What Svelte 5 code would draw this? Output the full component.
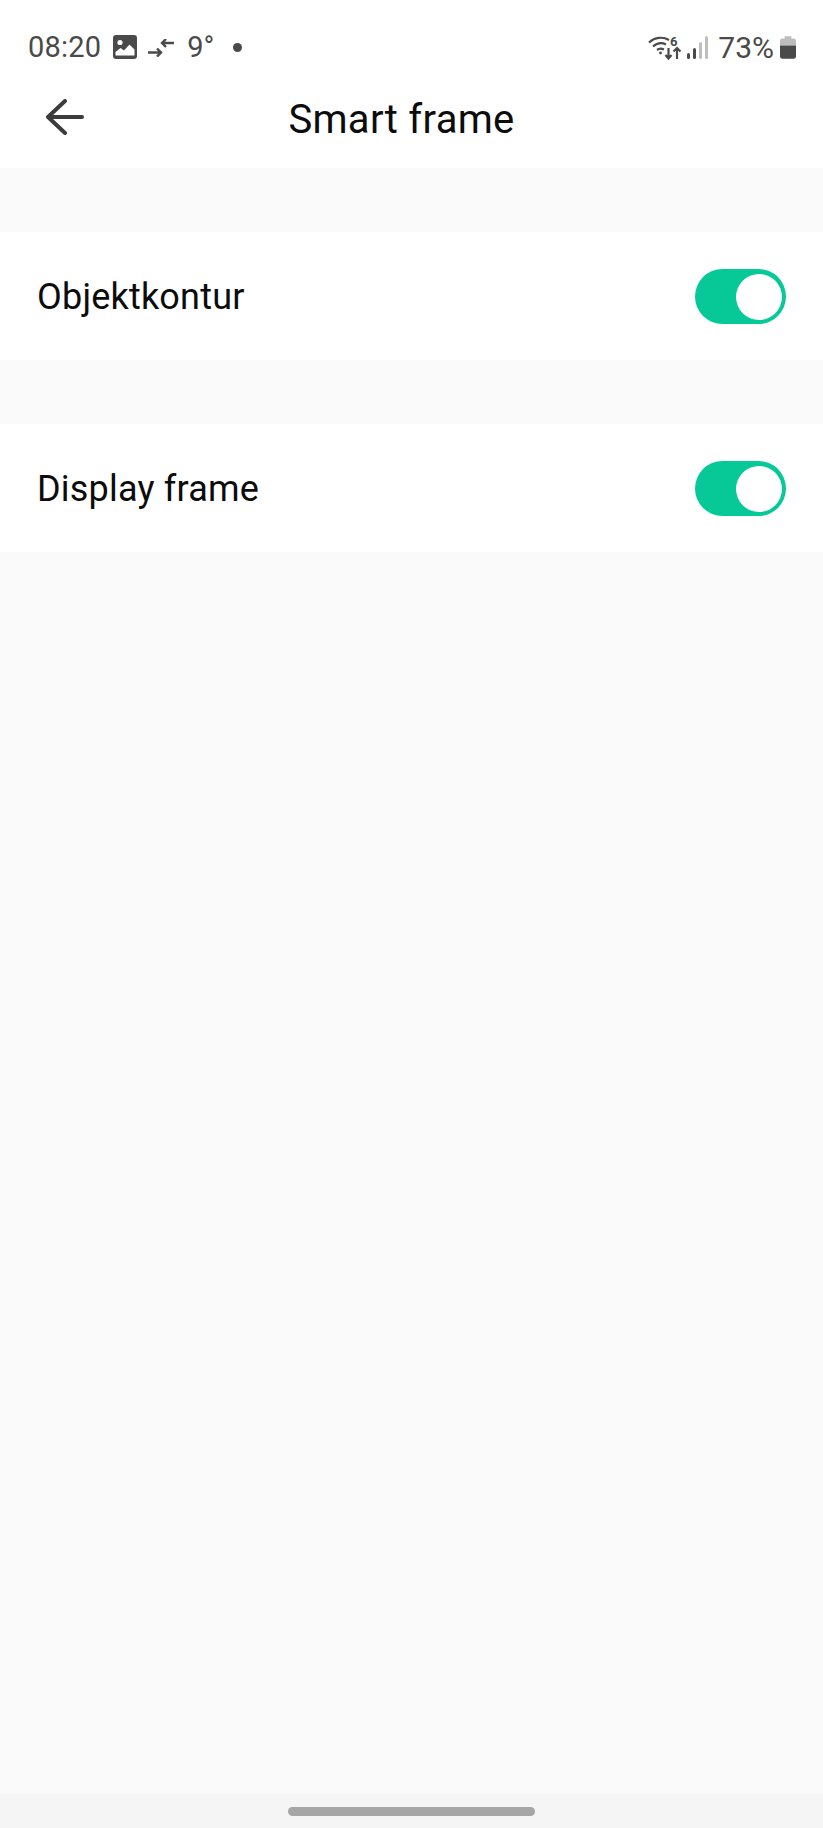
<script lang="ts">
  let settings = $state([
    { id: 'outline', label: 'Objektkontur', on: true },
    { id: 'frame', label: 'Display frame', on: true },
  ]);
</script>

<div class="screen">
  <div class="top">
    <div class="status">
      <div class="status-left">
        <span class="time">08:20</span>
        <svg class="ic-photo" width="24" height="24" viewBox="0 0 24 24">
          <rect x="0" y="0" width="24" height="24" rx="3" fill="#4a4a4a" />
          <circle cx="7" cy="7.500" r="2.600" fill="#fff" />
          <path d="M2.500 20.500v-3.500l5-4 3.500 2.500 5.500-6 5 5v6z" fill="#fff" />
        </svg>
        <svg class="ic-data" width="27" height="18" viewBox="0 0 27 18" fill="none" stroke="#4a4a4a" stroke-width="2.400">
          <path d="M0 13.500h13M9 9.500l4 4-4 4" />
          <path d="M26 4H14M18 0l-4 4 4 4" />
        </svg>
        <span class="temp">9°</span>
        <span class="dot"></span>
      </div>
      <div class="status-right">
        <svg class="ic-wifi" width="34" height="25" viewBox="0 0 34 25" fill="none" stroke="#4a4a4a" stroke-width="2.200">
          <path d="M1 7.500C7 2 15 1.500 21 5" />
          <path d="M5 11.500C9 8 14 7.500 18 9.500" />
          <path d="M9 15c2-1.500 5-1.500 7-.5" />
          <circle cx="12.500" cy="18" r="1.400" fill="#4a4a4a" stroke="none" />
          <path d="M20.500 13v10M17.500 20l3 3.500 3-3.500" />
          <path d="M29 24V13M25.500 16.500l3.500-3.500 3.500 3.500" />
          <text x="22" y="11" class="wifi-six" fill="#4a4a4a" stroke="none">6</text>
        </svg>
        <svg class="ic-signal" width="21" height="23" viewBox="0 0 21 23">
          <rect x="0" y="17" width="3" height="6" rx="1.500" fill="#4a4a4a" />
          <rect x="6" y="12" width="3" height="11" rx="1.500" fill="#4a4a4a" />
          <rect x="12" y="6" width="3" height="17" rx="1.500" fill="#bdbdbd" />
          <rect x="18" y="0" width="3" height="23" rx="1.500" fill="#bdbdbd" />
        </svg>
        <span class="pct">73%</span>
        <svg class="ic-batt" width="16" height="23" viewBox="0 0 17 24">
          <path d="M5 0h7v2.500h2.500A2.500 2.500 0 0 1 17 5v5H0V5a2.500 2.500 0 0 1 2.500-2.500H5z" fill="#bdbdbd" />
          <path d="M0 10h17v11.500a2.500 2.500 0 0 1-2.500 2.500h-12A2.500 2.500 0 0 1 0 21.500z" fill="#4a4a4a" />
        </svg>
      </div>
    </div>
    <div class="header">
      <svg class="back" width="38" height="36" viewBox="0 0 38 36" fill="none" stroke="#3c3c3c" stroke-width="4" stroke-linecap="round" stroke-linejoin="round">
        <path d="M19 2 2 18l17 16M2.500 18H36" />
      </svg>
      <h1>Smart frame</h1>
    </div>
  </div>

  {#each settings as item (item.id)}
    <div class="row">
      <span class="label">{item.label}</span>
      <button class="toggle" class:on={item.on} aria-label={item.label} onclick={() => (item.on = !item.on)}>
        <span class="knob"></span>
      </button>
    </div>
  {/each}

  <div class="fill"></div>

  <div class="nav">
    <div class="handle"></div>
  </div>
</div>

<style>
  :global(body) {
    margin: 0;
    background: #fafafa;
  }

  .screen {
    display: flex;
    flex-direction: column;
    height: 1828px;
    background: #fafafa;
    font-family: Roboto, "Liberation Sans", sans-serif;
    overflow: hidden;
  }

  /* Status bar + title */
  .top {
    height: 168px;
    background: #fff;
    margin-bottom: 64px;
    flex-shrink: 0;
  }

  .status {
    display: flex;
    justify-content: space-between;
    align-items: center;
    height: 46px;
    padding: 24px 27px 0 28px;
    color: #4a4a4a;
  }
  .status-left, .status-right { display: flex; align-items: center; }
  .time { font-size: 29px; letter-spacing: 0.2px; }
  .ic-photo { margin-left: 12px; }
  .ic-data { margin-left: 11px; margin-top: 2px; }
  .temp { font-size: 29px; margin-left: 12px; }
  .dot {
    width: 9px;
    height: 9px;
    border-radius: 50%;
    background: #4a4a4a;
    margin-left: 19px;
  }
  .wifi-six { font-size: 13px; font-weight: 700; }
  .ic-signal { margin-left: 5px; }
  .pct { font-size: 30px; margin-left: 10px; }
  .ic-batt { margin-left: 6px; }

  .header {
    position: relative;
    display: flex;
    align-items: center;
    justify-content: center;
    height: 64px;
    margin-top: 17px;
  }
  .back {
    position: absolute;
    left: 46px;
    top: 12px;
  }
  h1 {
    margin: 0;
    margin-left: -20px;
    font-size: 40px;
    font-weight: 400;
    letter-spacing: 0.3px;
    color: #0c0c0c;
  }

  /* Rows */
  .row {
    display: flex;
    align-items: center;
    justify-content: space-between;
    height: 128px;
    padding: 0 37px;
    background: #fff;
    flex-shrink: 0;
  }
  .row + .row { margin-top: 64px; }
  .label {
    padding-top: 2px;
    font-size: 36px;
    letter-spacing: 0.2px;
    color: #0c0c0c;
  }

  .toggle {
    display: block;
    position: relative;
    width: 91px;
    height: 55px;
    padding: 0;
    border: none;
    border-radius: 28px;
    background: #bbb;
    cursor: pointer;
  }
  .toggle.on { background: #06c997; }
  .knob {
    position: absolute;
    top: 5px;
    left: 5px;
    width: 46px;
    height: 46px;
    border-radius: 50%;
    background: #fff;
  }
  .toggle.on .knob { left: 41px; }

  .fill { flex: 1; }

  /* Gesture bar */
  .nav {
    display: flex;
    justify-content: center;
    height: 34px;
    background: #f5f5f5;
    flex-shrink: 0;
  }
  .handle {
    width: 247px;
    height: 9px;
    margin-top: 13px;
    border-radius: 5px;
    background: #a6a6a6;
  }
</style>
